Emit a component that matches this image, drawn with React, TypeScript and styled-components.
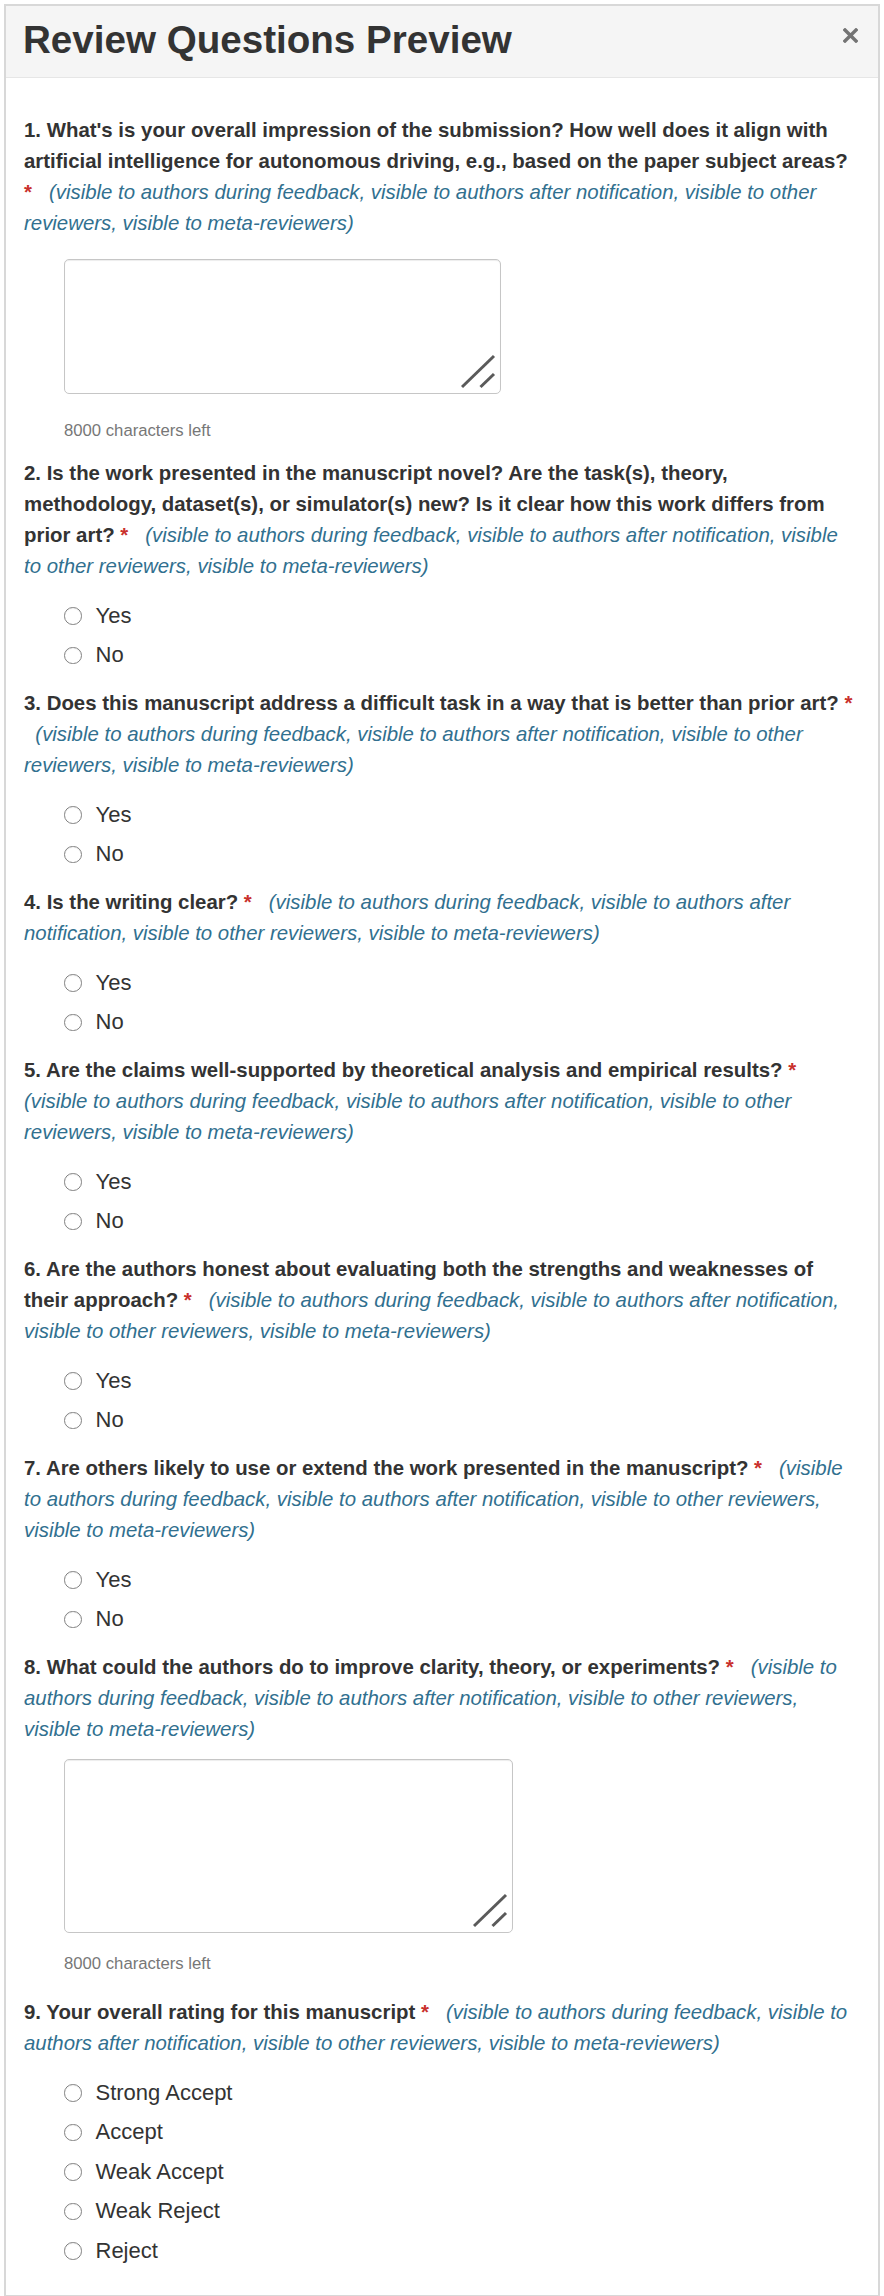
import React from "react";
import styled, { createGlobalStyle } from "styled-components";

const GlobalStyle = createGlobalStyle`
  html, body { margin: 0; padding: 0; background: #ffffff; }
  body {
    font-family: "Liberation Sans", Arial, Helvetica, sans-serif;
    color: #333333;
  }
`;

const Modal = styled.div`
  margin: 4px;
  border: 2px solid #d8d8d8;
  background: #ffffff;
`;

const Header = styled.div`
  display: flex;
  align-items: flex-start;
  justify-content: space-between;
  padding: 15px 20px 18px 17px;
  background: #f5f5f5;
  border-bottom: 1px solid #e6e6e6;
`;

const Title = styled.h1`
  margin: 0;
  font-size: 38.6px;
  line-height: 38px;
  font-weight: 700;
  color: #333333;
`;

const Close = styled.button`
  display: block;
  width: 15px;
  height: 15px;
  margin-top: 7px;
  padding: 0;
  border: 0;
  background: none;
  cursor: pointer;
`;

const Body = styled.div`
  padding: 37px 22px 11px 18px;
`;

const Question = styled.div`
  margin-bottom: 13px;
`;

const Label = styled.div`
  font-size: 20.4px;
  line-height: 31px;
  font-weight: 700;
  color: #333333;
`;

const Star = styled.span<{ $gap?: boolean }>`
  color: #c9302c;
  margin-right: ${(p) => (p.$gap ? "11px" : "0")};
`;

const Vis = styled.span`
  font-weight: 400;
  font-style: italic;
  color: #31708f;
`;

const FieldWrap = styled.div<{ $w: number; $h: number; $top: number }>`
  position: relative;
  margin: ${(p) => p.$top}px 0 0 40px;
  width: ${(p) => p.$w}px;
  height: ${(p) => p.$h}px;
`;

const Area = styled.textarea`
  display: block;
  box-sizing: border-box;
  width: 100%;
  height: 100%;
  margin: 0;
  padding: 8px 12px;
  border: 1.5px solid #c6c6c6;
  border-radius: 5px;
  box-shadow: inset 0 1px 1px rgba(0, 0, 0, 0.075);
  background: #ffffff;
  font: inherit;
  font-size: 20px;
  resize: none;
  outline: none;
`;

const Grip = styled.svg`
  position: absolute;
  right: 0;
  bottom: 0;
  pointer-events: none;
`;

const Counter = styled.div<{ $top: number; $bottom: number }>`
  margin: ${(p) => p.$top}px 0 0 40px;
  padding-bottom: ${(p) => p.$bottom}px;
  font-size: 16.7px;
  line-height: 24px;
  color: #777777;
`;

const Options = styled.div`
  display: flex;
  flex-direction: column;
  margin: 14px 0 0 40px;
`;

const Option = styled.label`
  display: flex;
  align-items: center;
  gap: 14px;
  height: 39.5px;
  font-size: 22px;
  color: #333333;
  cursor: pointer;
`;

const Radio = styled.input`
  appearance: none;
  -webkit-appearance: none;
  flex: none;
  box-sizing: border-box;
  width: 17.5px;
  height: 17.5px;
  margin: 0;
  border: 1.5px solid #828282;
  border-radius: 50%;
  background: #ffffff;
  box-shadow: inset 0 1px 1px rgba(0, 0, 0, 0.06);
`;

const VIS =
  "(visible to authors during feedback, visible to authors after notification, visible to other reviewers, visible to meta-reviewers)";

type Q = {
  text: string;
  kind: "text" | "radio";
  options?: string[];
  w?: number;
  h?: number;
  top?: number;
  counterTop?: number;
  counterBottom?: number;
  flush?: boolean;
};

const YN = ["Yes", "No"];

const questions: Q[] = [
  {
    text: "What's is your overall impression of the submission? How well does it align with artificial intelligence for autonomous driving, e.g., based on the paper subject areas?",
    kind: "text",
    w: 437,
    h: 135,
    top: 20,
    counterTop: 25,
    counterBottom: 2,
  },
  {
    text: "Is the work presented in the manuscript novel? Are the task(s), theory, methodology, dataset(s), or simulator(s) new? Is it clear how this work differs from prior art?",
    kind: "radio",
    options: YN,
  },
  {
    text: "Does this manuscript address a difficult task in a way that is better than prior art?",
    kind: "radio",
    options: YN,
  },
  { text: "Is the writing clear?", kind: "radio", options: YN },
  {
    text: "Are the claims well-supported by theoretical analysis and empirical results?",
    kind: "radio",
    options: YN,
    flush: true,
  },
  {
    text: "Are the authors honest about evaluating both the strengths and weaknesses of their approach?",
    kind: "radio",
    options: YN,
  },
  {
    text: "Are others likely to use or extend the work presented in the manuscript?",
    kind: "radio",
    options: YN,
  },
  {
    text: "What could the authors do to improve clarity, theory, or experiments?",
    kind: "text",
    w: 449,
    h: 174,
    top: 14,
    counterTop: 19,
    counterBottom: 8,
  },
  {
    text: "Your overall rating for this manuscript",
    kind: "radio",
    options: ["Strong Accept", "Accept", "Weak Accept", "Weak Reject", "Reject"],
  },
];

function ResizeGrip() {
  return (
    <Grip width="40" height="40" viewBox="0 0 40 40">
      <line x1="1" y1="33" x2="33" y2="2" stroke="#5a5a5a" strokeWidth="3" />
      <line x1="19.5" y1="33" x2="33" y2="20" stroke="#5a5a5a" strokeWidth="3" />
    </Grip>
  );
}

function QuestionBlock({ q, n }: { q: Q; n: number }) {
  return (
    <Question>
      <Label>
        {n}. {q.text} <Star $gap={q.flush}>*</Star>{" "}
        <Vis>
          {q.flush ? "" : "\u00a0\u00a0"}
          {VIS}
        </Vis>
      </Label>
      {q.kind === "text" ? (
        <>
          <FieldWrap $w={q.w ?? 437} $h={q.h ?? 135} $top={q.top ?? 20}>
            <Area aria-label={`Answer ${n}`} />
            <ResizeGrip />
          </FieldWrap>
          <Counter $top={q.counterTop ?? 25} $bottom={q.counterBottom ?? 2}>
            8000 characters left
          </Counter>
        </>
      ) : (
        <Options>
          {q.options!.map((o) => (
            <Option key={o}>
              <Radio type="radio" name={`q${n}`} value={o} />
              {o}
            </Option>
          ))}
        </Options>
      )}
    </Question>
  );
}

export default function App() {
  return (
    <>
      <GlobalStyle />
      <Modal>
        <Header>
          <Title>Review Questions Preview</Title>
          <Close aria-label="Close">
            <svg width="15" height="15" viewBox="0 0 15 15">
              <path d="M2 2 L13 13 M13 2 L2 13" stroke="#747474" strokeWidth="3.4" strokeLinecap="square" />
            </svg>
          </Close>
        </Header>
        <Body>
          {questions.map((q, i) => (
            <QuestionBlock key={i} q={q} n={i + 1} />
          ))}
        </Body>
      </Modal>
    </>
  );
}
